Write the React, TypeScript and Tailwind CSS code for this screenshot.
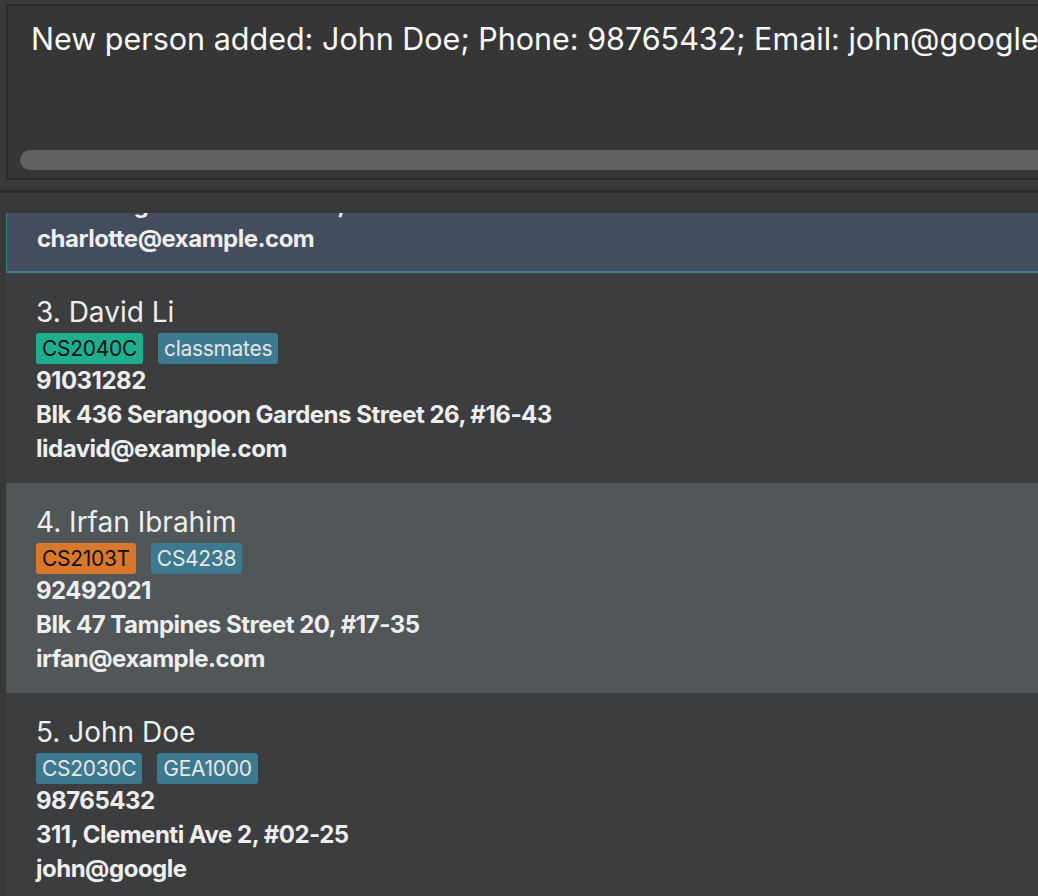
import React from "react";

const blue = "bg-[#3e7a8f] text-[#e6e6e6]";

const people = [
  {
    idx: 3,
    name: "David Li",
    tags: [
      { label: "CS2040C", cls: "bg-[#1eaf8f] text-[#111111]" },
      { label: "classmates", cls: blue },
    ],
    phone: "91031282",
    address: "Blk 436 Serangoon Gardens Street 26, #16-43",
    email: "lidavid@example.com",
    bg: "bg-[#3c3d3f]",
  },
  {
    idx: 4,
    name: "Irfan Ibrahim",
    tags: [
      { label: "CS2103T", cls: "bg-[#d9782a] text-[#111111]" },
      { label: "CS4238", cls: blue },
    ],
    phone: "92492021",
    address: "Blk 47 Tampines Street 20, #17-35",
    email: "irfan@example.com",
    bg: "bg-[#515658]",
  },
  {
    idx: 5,
    name: "John Doe",
    tags: [
      { label: "CS2030C", cls: blue },
      { label: "GEA1000", cls: blue },
    ],
    phone: "98765432",
    address: "311, Clementi Ave 2, #02-25",
    email: "john@google",
    bg: "bg-[#3c3d3f]",
  },
];

function Card({ p }: { p: (typeof people)[number] }) {
  return (
    <div className={`${p.bg} h-[210px] shrink-0 pl-[30px] pt-[22px]`}>
      <div className="text-[28px] leading-[34px] text-[#eeeeee] whitespace-nowrap">
        {p.idx}. {p.name}
      </div>
      <div className="mt-[4px] flex gap-[15px]">
        {p.tags.map((t) => (
          <span
            key={t.label}
            className={`${t.cls} h-[31px] rounded-[3px] px-[6px] text-[21px] leading-[31px] tracking-[-0.3px]`}
          >
            {t.label}
          </span>
        ))}
      </div>
      <div className="text-[24px] font-bold leading-[34px] tracking-[-0.5px] text-[#eeeeee] whitespace-nowrap">
        <div>{p.phone}</div>
        <div>{p.address}</div>
        <div>{p.email}</div>
      </div>
    </div>
  );
}

export default function App() {
  return (
    <div
      className="h-[896px] w-[1038px] overflow-hidden bg-[#393939] flex flex-col"
      style={{ fontFamily: "Inter, 'Noto Sans', sans-serif" }}
    >
      {/* result display */}
      <div className="pt-[4px] pl-[6px]">
        <div className="h-[176px] border-t-[2px] border-l-[2px] border-b-[2px] border-[#2b2b2b] bg-[#363636] flex flex-col overflow-hidden">
          <div className="pl-[23px] pt-[15px] text-[30.5px] leading-[36px] text-[#fafafa] whitespace-nowrap">
            New person added: John Doe; Phone: 98765432; Email: john@google
          </div>
          <div className="mt-auto mb-[8px] ml-[12px] h-[20px] rounded-l-[10px] bg-[#616161]" />
        </div>
      </div>
      <div className="h-[10px]" />
      <div className="h-[3px] bg-[#2b2b2b]" />
      <div className="h-[20px]" />
      {/* person list */}
      <div className="flex-1 overflow-hidden pl-[6px]">
        <div className="flex flex-col">
          <div className="h-[60px] shrink-0 overflow-hidden border-l border-b-[2px] border-[#3e7c91] bg-[#434d5e]">
            <div className="-mt-[150px] pl-[30px] pt-[22px]">
              <div className="text-[28px] leading-[34px] text-[#eeeeee]">2. Charlotte Oliveiro</div>
              <div className="h-[35px]" />
              <div className="text-[24px] font-bold leading-[34px] tracking-[-0.5px] text-[#eeeeee] whitespace-nowrap">
                <div>93210283</div>
                <div>Blk 11 Ang Mo Kio Street 74, #11-04</div>
                <div>charlotte@example.com</div>
              </div>
            </div>
          </div>
          {people.map((p) => (
            <Card key={p.idx} p={p} />
          ))}
        </div>
      </div>
    </div>
  );
}
